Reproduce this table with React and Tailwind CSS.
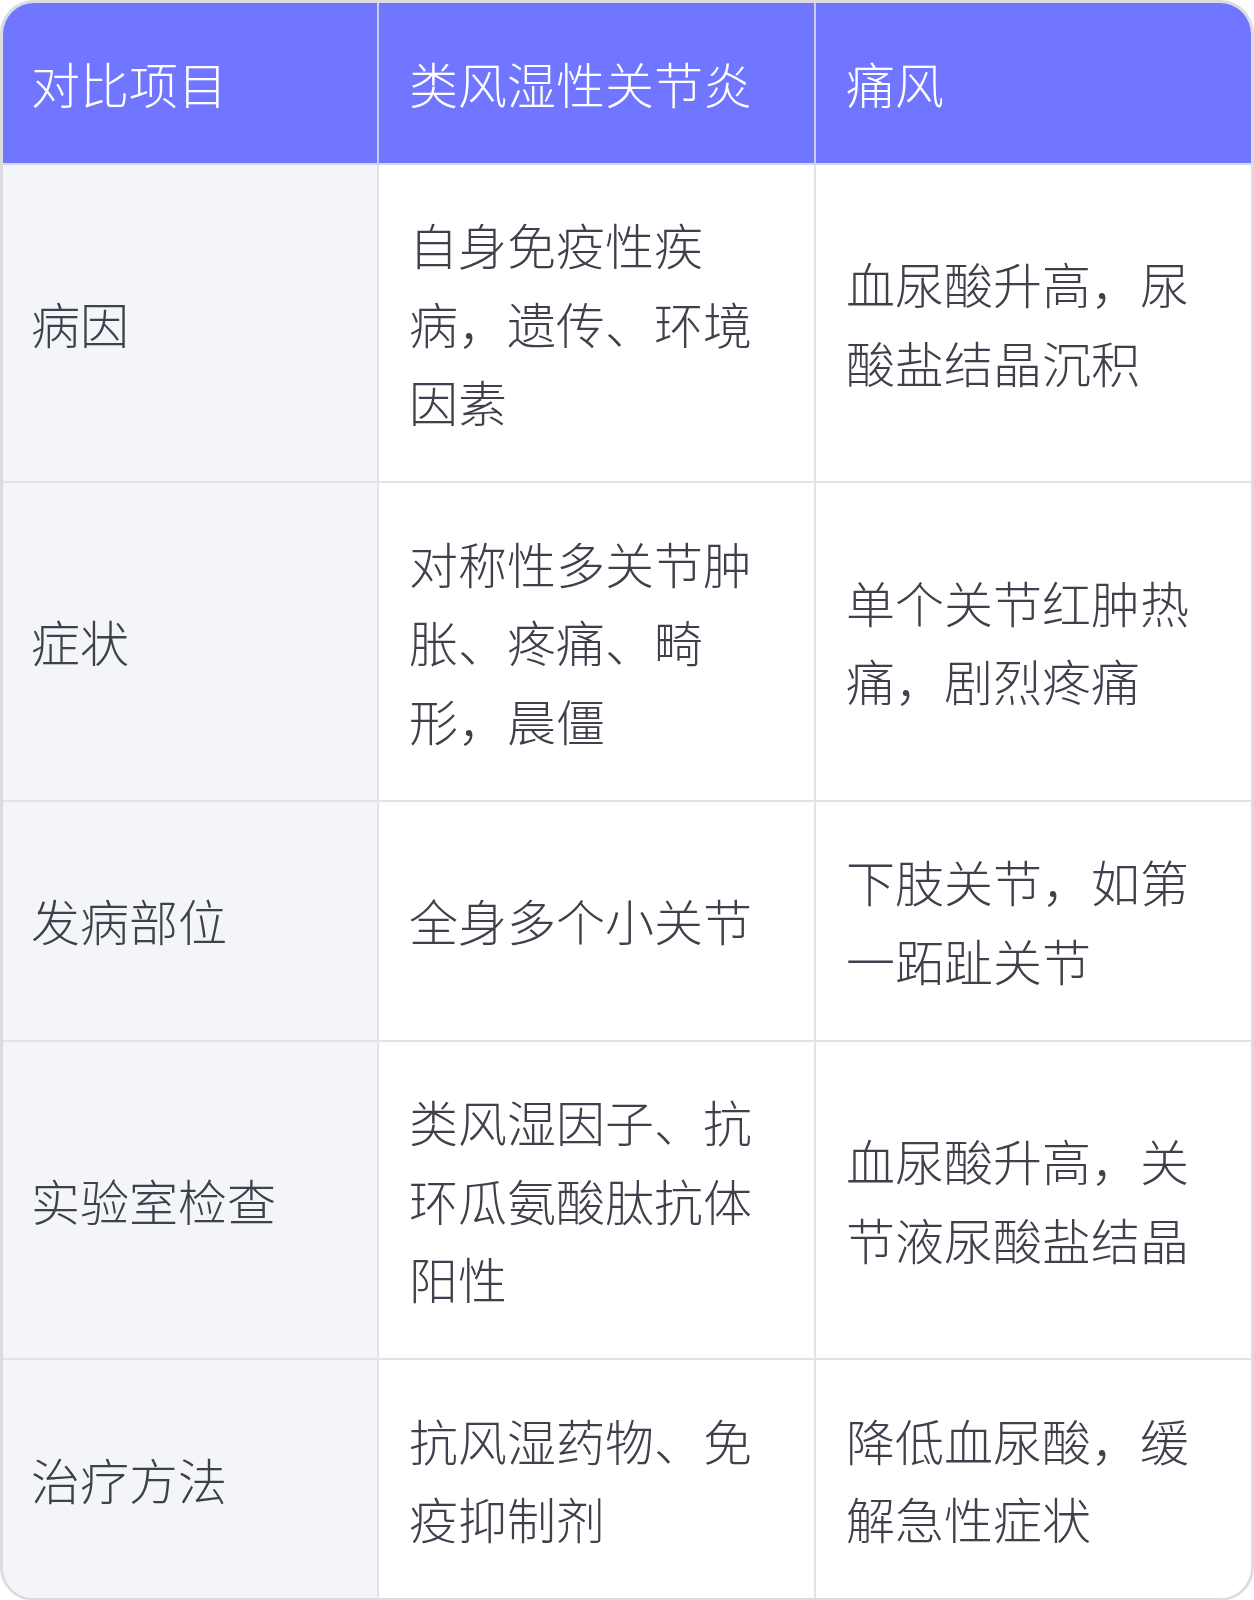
import React from "react";

const rows = [
  ["病因", "自身免疫性疾病，遗传、环境因素", "血尿酸升高，尿酸盐结晶沉积"],
  ["症状", "对称性多关节肿胀、疼痛、畸形，晨僵", "单个关节红肿热痛，剧烈疼痛"],
  ["发病部位", "全身多个小关节", "下肢关节，如第一跖趾关节"],
  ["实验室检查", "类风湿因子、抗环瓜氨酸肽抗体阳性", "血尿酸升高，关节液尿酸盐结晶"],
  ["治疗方法", "抗风湿药物、免疫抑制剂", "降低血尿酸，缓解急性症状"],
];

const font = { fontFamily: '"Noto Sans CJK SC", "Noto Sans", sans-serif' };

export default function App() {
  return (
    <div className="w-[1254px] bg-white" style={font}>
      <div className="w-[1254px] border-[3px] border-[#dcdcde] rounded-[34px] overflow-hidden">
        <div className="grid grid-cols-[376px_437px_1fr] text-[49px] leading-[78.5px] font-light">
          <div className="bg-[#7076ff] text-white pl-[28px] pr-[30px] py-[40.5px] border-r-2 border-b-2 border-r-[#c9cbf3] border-b-[#d6d8f0]">对比项目</div>
          <div className="bg-[#7076ff] text-white px-[30px] py-[40.5px] border-r-2 border-b-2 border-r-[#c9cbf3] border-b-[#d6d8f0]">类风湿性关节炎</div>
          <div className="bg-[#7076ff] text-white px-[30px] py-[40.5px] border-b-2 border-b-[#d6d8f0]">痛风</div>
          {rows.map((r, i) => (
            <React.Fragment key={i}>
              <div className={`bg-[#f4f5f9] text-[#3e414b] pl-[28px] pr-[30px] py-[40.5px] flex items-center border-r-2 border-[#e2e3e7] ${i < rows.length - 1 ? "border-b-2" : ""}`}>{r[0]}</div>
              <div className={`bg-white text-[#3e414b] px-[30px] py-[40.5px] flex items-center border-r-2 border-[#e2e3e7] ${i < rows.length - 1 ? "border-b-2" : ""}`}>{r[1]}</div>
              <div className={`bg-white text-[#3e414b] px-[30px] py-[40.5px] flex items-center border-[#e2e3e7] ${i < rows.length - 1 ? "border-b-2" : ""}`}>{r[2]}</div>
            </React.Fragment>
          ))}
        </div>
      </div>
    </div>
  );
}
